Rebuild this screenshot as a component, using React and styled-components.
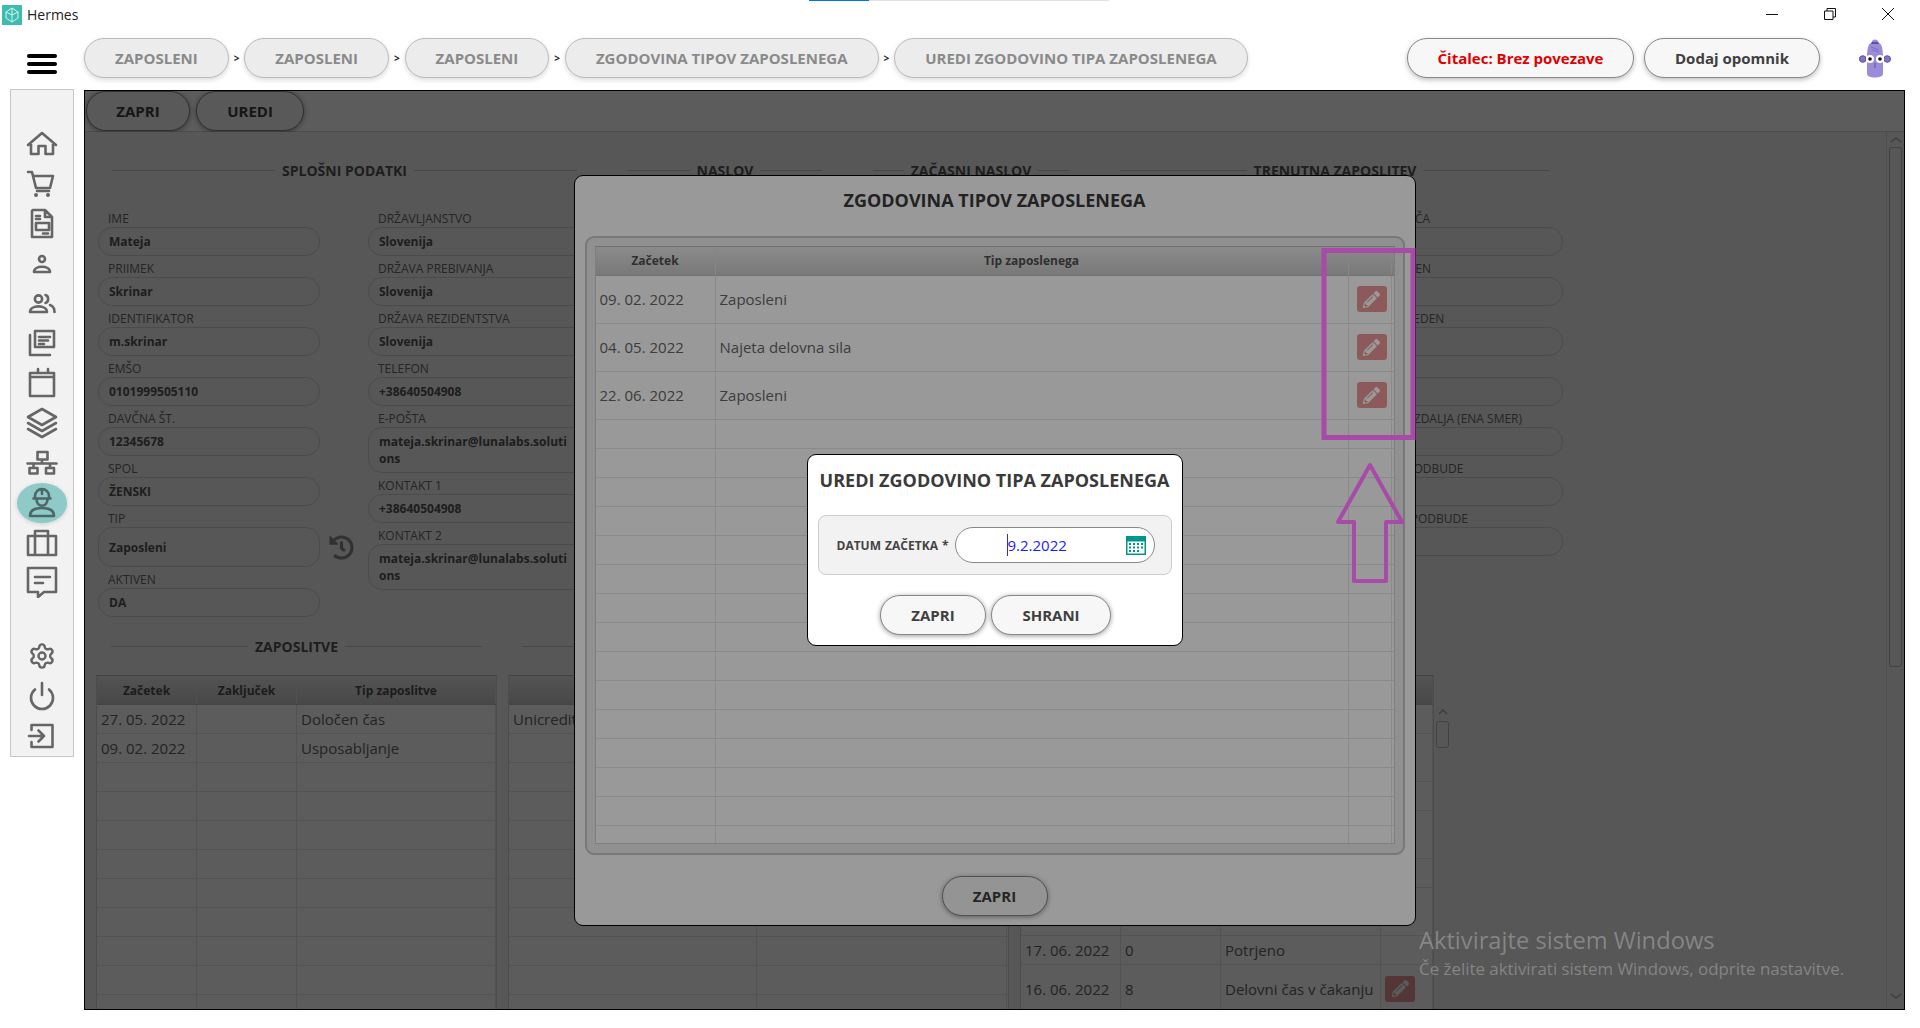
import React from 'react';
import styled, { createGlobalStyle } from 'styled-components';
import { FaPencilAlt, FaHistory } from 'react-icons/fa';
import { Settings } from 'lucide-react';

const Global = createGlobalStyle`
  html, body { margin: 0; padding: 0; background: #fff; }
  * { box-sizing: border-box; }
  body { font-family: "Open Sans", "Noto Sans", sans-serif; }
`;

const Page = styled.div`
  width: 1920px; height: 1028px; overflow: hidden; background: #fff;
  display: flex; flex-direction: column; position: relative;
`;

/* ---------- title bar ---------- */
const TitleBar = styled.div`
  height: 30px; display: flex; align-items: center; padding-left: 2px; position: relative;
`;
const AppTitle = styled.span`
  font-size: 14px; color: #222; margin-left: 5px; margin-top: -1px;
`;
const Progress = styled.div`
  position: absolute; left: 809px; top: 0; width: 300px; height: 1px; background: #e2e2e2;
`;
const ProgressFill = styled.div`
  width: 60px; height: 1px; background: #0078d7;
`;
const WinControls = styled.div`
  margin-left: auto; display: flex; align-items: center; padding-right: 26px; gap: 46px; margin-top: -3px;
`;

/* ---------- header ---------- */
const Header = styled.header`
  height: 60px; display: flex; align-items: center; padding-bottom: 4px;
`;
const BurgerSlot = styled.div`
  width: 84px; padding-left: 27px; margin-top: 12px; display: flex; flex-direction: column; gap: 4px;
`;
const BurgerBar = styled.span`
  display: block; width: 30px; height: 4px; border-radius: 2px; background: #000;
`;
const Crumbs = styled.nav`
  display: flex; align-items: center;
`;
const Crumb = styled.div`
  height: 40px; padding: 0 30px; display: flex; align-items: center;
  border-radius: 20px; border: 1px solid #bbb; background: #ececec;
  color: #8a8a8a; font-weight: 700; font-size: 15px; white-space: nowrap;
  box-shadow: 0 2px 5px rgba(0,0,0,.14);
`;
const CrumbSep = styled.span`
  width: 15.6px; text-align: center; font-size: 10px; font-weight: 700; color: #222;
`;
const HeaderRight = styled.div`
  margin-left: auto; display: flex; align-items: center; padding-right: 29px;
`;
const StatusPill = styled.div`
  height: 40px; display: flex; align-items: center; justify-content: center;
  width: ${p => p.$w}px; margin-right: ${p => p.$mr}px;
  border-radius: 20px; border: 1px solid #888; background: #f7f7f7;
  color: ${p => p.$color}; font-weight: 700; font-size: 15px;
  box-shadow: 0 2px 5px rgba(0,0,0,.25);
`;

/* ---------- layout ---------- */
const Main = styled.div`
  display: flex; align-items: flex-start;
`;
const Sidebar = styled.aside`
  width: 64px; height: 668px; margin: -1px 0 0 10px; padding-top: 34px;
  background: #f2f2f2; border: 1px solid #c6c6c6; display: flex; flex-direction: column; align-items: center;
`;
const NavItem = styled.div`
  width: 50px; height: 40px; display: flex; align-items: center; justify-content: center;
  border-radius: 50%; color: ${p => (p.$active ? '#4d6666' : '#666')};
  background: ${p => (p.$active ? '#8ecbc8' : 'transparent')};
  box-shadow: ${p => (p.$active ? '0 1px 4px rgba(0,0,0,.15)' : 'none')};
  margin-top: ${p => p.$mt || 0}px;
`;
const NavIcon = styled.svg`
  width: 32px; height: 32px; fill: none; stroke: currentColor; stroke-width: 2.6;
  stroke-linejoin: round; stroke-linecap: round;
`;

const Panel = styled.main`
  position: relative; margin-left: 10px; width: 1821px; height: 920px; overflow: hidden;
  border: 1px solid #000; background: #fff; display: flex; flex-direction: column;
`;
const Toolbar = styled.div`
  height: 41px; flex: none; display: flex; gap: 6px; padding-left: 1px; border-bottom: 1px solid #d8d8d8;
`;
const PillButton = styled.button`
  height: 40px; width: ${p => p.$w}px; border-radius: 20px; border: 1px solid #888; background: #f7f7f7;
  color: #404040; font: 700 15px "Open Sans", sans-serif; padding: 0; flex: none;
  box-shadow: 0 1px 5px rgba(0,0,0,.4);
`;
const Body = styled.div`
  flex: 1; min-height: 0; display: flex; background: #f2f2f2;
`;
const Content = styled.div`
  flex: 1; min-width: 0; padding: 28px 0 0 11px; overflow: hidden;
`;
const OuterScroll = styled.div`
  width: 18px; flex: none; border-left: 1px solid #d8d8d8; display: flex; flex-direction: column; align-items: center; padding-top: 2px;
`;
const ScrollThumb = styled.div`
  width: ${p => p.$w}px; height: ${p => p.$h}px; margin-top: ${p => p.$mt}px; border: 1px solid #b8b8b8; border-radius: 3px;
  background: #f2f2f2; flex: none;
`;
const ScrollGlyph = styled.svg`
  width: 12px; height: 8px; fill: none; stroke: #a8a8a8; stroke-width: 1.3; flex: none;
  margin-top: ${p => p.$mt || 0}px;
`;

/* ---------- form ---------- */
const TopGrid = styled.div`
  margin-left: 2px; display: grid; grid-template-columns: 479px 194px 196px 443px; column-gap: 51px;
`;
const SectionTitle = styled.div`
  height: 20px; display: flex; align-items: center; gap: 7px;
  padding: 0 ${p => p.$pr || 0}px 0 ${p => p.$pl || 0}px;
  font-weight: 700; font-size: 14px; color: #555; white-space: nowrap;
  &::before, &::after { content: ""; flex: 1; height: 1px; background: #c8c8c8; }
`;
const FieldCols = styled.div`
  display: grid; grid-template-columns: 270px 222px; margin-top: 26px;
`;
const FieldCol = styled.div`
  display: flex; flex-direction: column; margin-left: ${p => p.$ml || 0}px; width: ${p => p.$w || 'auto'};
`;
const FieldLabel = styled.div`
  height: 21px; padding: 4px 0 0 10px; font-size: 12px; line-height: 17px; color: #6a6a6a; white-space: nowrap;
`;
const FieldRow = styled.div`
  display: flex; align-items: center; gap: 9px;
`;
const FieldValue = styled.div`
  width: 222px; height: ${p => p.$h || 29}px; flex: none; border: 1px solid #d2d2d2; border-radius: 14px;
  padding: ${p => (p.$wrap ? '5px 21px 0 10px' : '0 10px')}; display: ${p => (p.$wrap ? 'block' : 'flex')}; align-items: center;
  font-size: 12px; font-weight: 700; color: #555; line-height: 17px; word-break: break-all;
`;
const HistoryIcon = styled(FaHistory)`
  color: #8a8a8a; flex: none;
`;

const LowerRow = styled.div`
  display: flex; margin-top: 19px; gap: 11px;
`;
const LowerSection = styled.section`
  width: ${p => p.$w}px; flex: none;
`;
const TableHolder = styled.div`
  margin-top: 19px; display: flex;
`;
const InnerScroll = styled.div`
  width: 17px; flex: none; padding-top: 33px; display: flex; flex-direction: column; align-items: center; background: #f2f2f2;
`;

/* ---------- tables ---------- */
const DataTable = styled.div`
  flex: 1; min-width: 0; height: ${p => (p.$h ? p.$h + 'px' : 'auto')}; overflow: hidden;
  border: 1px solid #d4d4d4; border-top-color: #bbb; background: #fff;
`;
const Rows = styled.div`
  display: grid; grid-template-columns: ${p => p.$cols}; height: ${p => p.$h}px;
  border-bottom: 1px solid #e6e6e6;
`;
const HeadRows = styled(Rows)`
  background: linear-gradient(#e8e8e8, #c9c9c9); border-bottom: 1px solid #c0c0c0;
`;
const HeadCell = styled.div`
  display: flex; align-items: center; justify-content: center; font-size: 12px; font-weight: 700; color: #505050;
  border-right: 1px solid #dedede; white-space: nowrap;
`;
const Cell = styled.div`
  display: flex; align-items: center; padding-left: ${p => p.$pl || 4}px; font-size: 15px; color: #666;
  border-right: 1px solid #e6e6e6; white-space: nowrap; overflow: hidden;
`;
const EditBtn = styled.div`
  width: 30px; height: 26px; border-radius: 3px; background: #ec9699; color: #fff;
  display: flex; align-items: center; justify-content: center; flex: none;
`;

/* ---------- modals ---------- */
const Overlay = styled.div`
  position: absolute; inset: 0; background: rgba(0,0,0,.4);
  display: flex; align-items: center; justify-content: center;
`;
const HistoryModal = styled.div`
  width: 842px; height: 751px; background: #fff; border: 1px solid #000; border-radius: 9px;
  display: flex; flex-direction: column; align-items: center;
`;
const ModalTitle = styled.div`
  height: ${p => p.$h}px; flex: none; display: flex; align-items: center; justify-content: center;
  font-weight: 700; font-size: 18px; color: #3a3a3a; white-space: nowrap; margin-bottom: ${p => p.$mb || 0}px;
`;
const HistoryBox = styled.div`
  width: 820px; height: 619px; flex: none; margin-bottom: 21px; padding: 8px 8px 9px 8px;
  border: 2px solid #c8c8c8; border-radius: 9px; background: #f0f0f0; display: flex;
`;
const EditModal = styled.div`
  width: 376px; height: 192px; background: #fff; border: 1px solid #000; border-radius: 9px;
  display: flex; flex-direction: column; align-items: center; padding-top: 12px;
`;
const FormBox = styled.div`
  width: 354px; height: 60px; margin-top: 22px; flex: none; background: #f2f2f2; border: 1px solid #ccc; border-radius: 8px;
  display: flex; align-items: center; padding-left: 18px;
`;
const FormLabel = styled.label`
  width: 118px; flex: none; font-size: 12px; font-weight: 700; color: #444; white-space: nowrap; word-spacing: 1px;
`;
const DateInput = styled.div`
  width: 200px; height: 36px; border: 1px solid #888; border-radius: 18px; background: #fff;
  display: flex; align-items: center; padding: 0 8px 0 51px;
`;
const DateText = styled.span`
  font-size: 15px; color: #1a1aff; border-left: 1px solid #2a2ae0; line-height: 22px; height: 22px;
`;
const CalendarIcon = styled.svg`
  width: 20px; height: 20px; margin-left: auto; flex: none;
`;
const ButtonRow = styled.div`
  display: flex; gap: 5px; margin-top: 20px; padding-left: 2px;
`;

/* ---------- things that lie over the page ---------- */
const Annotation = styled.svg`
  position: absolute; left: 1235px; top: 154px; width: 96px; height: 340px; fill: none; stroke: #a84ba8;
`;
const Watermark = styled.div`
  position: absolute; left: 1334px; top: 834px; color: rgba(255,255,255,.28); white-space: nowrap; pointer-events: none;
`;
const WatermarkTitle = styled.div`
  font-size: 23.7px; line-height: 30px;
`;
const WatermarkText = styled.div`
  font-size: 16.9px; line-height: 22px; margin-top: 3px;
`;

/* ---------- icons ---------- */
const Ico = ({ children }) => <NavIcon viewBox="0 0 32 32">{children}</NavIcon>;
const Fill = styled.circle`
  fill: currentColor; stroke: none;
`;
const icons = [
  <Ico key="home"><path d="M2 17 16 5l14 12M5 14.5V26h7.5v-8h7v8H27V14.5" /></Ico>,
  <Ico key="cart"><path d="M2 4h4l4 16h14l3-12H7M11 23h12" /><Fill cx="10" cy="27" r="2" /><Fill cx="22" cy="27" r="2" /></Ico>,
  <Ico key="doc"><path d="M7 2h12l7 7v20H6V3zM19 2v7h7M10 8h4M10 11h4M10 15h13v7H10zM17 25.5h5" /></Ico>,
  <Ico key="person"><circle cx="16" cy="11" r="3" /><path d="M8 24c0-7 16-7 16 0z" /></Ico>,
  <Ico key="people"><circle cx="12.5" cy="12" r="3.6" /><path d="M19.5 8c3.5 1 3.5 7 0 8M4 25c0-7.5 17-7.5 17 0zM24 18c3 1 4.500 4 4.500 7" /></Ico>,
  <Ico key="copies"><path d="M9 4h19v16H9zM4 8v20h20M13 10h11M13 13.500h9M13 17h5" /></Ico>,
  <Ico key="calendar"><path d="M4 6h24v23H4zM4 10h24M12 2v4M22 2v4" /></Ico>,
  <Ico key="layers"><path d="M16 2 30 10 16 18 2 10zM2 16l14 8 14-8M2 22l14 8 14-8" /></Ico>,
  <Ico key="network"><path d="M11.500 5h10v7.500h-10zM16 12.500v4M1.500 16.500h29M7.500 16.500v4M24 16.500v4M3.500 21h8v5.500h-8zM20 21h8v5.500h-8z" /></Ico>,
  <Ico key="worker" active><path d="M9 11.500V9a7 7 0 0 1 14 0v2.500M7.500 11.500h17M16 2v5M10.500 12c0 9 11 9 11 0M4 29c0-7 6-8 12-8s12 1 12 8z" /></Ico>,
  <Ico key="case"><path d="M2 9h28v19H2zM9 9V4h13v5M9 9v19M22 9v19" /></Ico>,
  <Ico key="chat"><path d="M2 2h28v24H18l-6 5v-5H2zM9 11h15M9 17h8" /></Ico>,
];

const Row = ({ cols, h, children }) => <Rows $cols={cols} $h={h}>{children}</Rows>;
const emptyRows = (cols, n, h = 29) =>
  Array.from({ length: n }, (_, i) => {
    const cells = cols.split(' ').map((_, j) => <Cell key={j} />);
    return <Row key={i} cols={cols} h={h}>{cells}</Row>;
  });

const Pencil = () => <FaPencilAlt size={17} />;

const T1 = '100px 100px 199px';
const T2 = '248px 250px';
const T3 = '100px 100px 160px 52px';
const TM = '120px 633px 43px';

const f1 = [['IME', 'Mateja'], ['PRIIMEK', 'Skrinar'], ['IDENTIFIKATOR', 'm.skrinar'], ['EMŠO', '0101999505110'], ['DAVČNA ŠT.', '12345678'], ['SPOL', 'ŽENSKI']];
const f2 = [['DRŽAVLJANSTVO', 'Slovenija'], ['DRŽAVA PREBIVANJA', 'Slovenija'], ['DRŽAVA REZIDENTSTVA', 'Slovenija'], ['TELEFON', '+38640504908']];
const f4 = ['BRUTO PLAČA', 'URE NA 1 DEN', 'URE NA 1 TEDEN', 'DOPUST', 'PREVOZ RAZDALJA (ENA SMER)', 'SKUPNE SPODBUDE', 'DODATNE PODBUDE'];
const history = [['09. 02. 2022', 'Zaposleni'], ['04. 05. 2022', 'Najeta delovna sila'], ['22. 06. 2022', 'Zaposleni']];
const crumbs = ['ZAPOSLENI', 'ZAPOSLENI', 'ZAPOSLENI', 'ZGODOVINA TIPOV ZAPOSLENEGA', 'UREDI ZGODOVINO TIPA ZAPOSLENEGA'];

const Field = ({ label, children }) => (
  <div>
    <FieldLabel>{label}</FieldLabel>
    {children}
  </div>
);

export default function App() {
  return (
    <Page>
      <Global />
      <TitleBar>
        <svg width="20" height="20" viewBox="0 0 20 20">
          <rect width="20" height="20" fill="#3dbdb0" />
          <path d="M10 3 4 7v6l6 4 6-4V7zM10 3v14M4 7l6 3 6-3" fill="none" stroke="#d8f3f0" strokeWidth="1" />
        </svg>
        <AppTitle>Hermes</AppTitle>
        <Progress><ProgressFill /></Progress>
        <WinControls>
          <svg width="12" height="12" viewBox="0 0 12 12"><path d="M0 6.500h12" stroke="#111" /></svg>
          <svg width="12" height="12" viewBox="0 0 12 12" fill="none"><path d="M.5 3h8.500v8.500H.5zM3 3V.5h8.500V9H9" stroke="#111" /></svg>
          <svg width="12" height="12" viewBox="0 0 12 12"><path d="m0 0 12 12M12 0 0 12" stroke="#111" /></svg>
        </WinControls>
      </TitleBar>

      <Header>
        <BurgerSlot><BurgerBar /><BurgerBar /><BurgerBar /></BurgerSlot>
        <Crumbs>
          {crumbs.map((c, i) => (
            <React.Fragment key={i}>
              {i > 0 && <CrumbSep>&gt;</CrumbSep>}
              <Crumb>{c}</Crumb>
            </React.Fragment>
          ))}
        </Crumbs>
        <HeaderRight>
          <StatusPill $w={227} $mr={10} $color="#e00000">Čitalec: Brez povezave</StatusPill>
          <StatusPill $w={176} $mr={39} $color="#404040">Dodaj opomnik</StatusPill>
          <svg width="32" height="39" viewBox="0 0 32 39">
            <path d="M16 .5c2 0 3 1 3.500 3l2.500 2c1.500 3 2 8 2 12v17c0 3-4 4-8 4s-8-1-8-4V17.500c0-4 .5-9 2-12l2.500-2c.5-2 1.500-3 3.500-3z" fill="#9b8bd8" />
            <path d="M13 3h6l1 2h-8z" fill="#5f4f9e" />
            <path d="M12 8l8 3M13 11l7 2" stroke="#7c6bc0" fill="none" />
            <circle cx="3.800" cy="20" r="3.300" fill="#8373c8" stroke="#5f4f9e" />
            <circle cx="28.200" cy="20" r="3.300" fill="#8373c8" stroke="#5f4f9e" />
            <circle cx="11" cy="20" r="4" fill="#fff" />
            <circle cx="21" cy="20" r="4" fill="#fff" />
            <circle cx="11" cy="20" r="1.800" fill="#111" />
            <circle cx="21" cy="20" r="1.800" fill="#111" />
            <path d="M16 24v5" stroke="#5f4f9e" fill="none" />
          </svg>
        </HeaderRight>
      </Header>

      <Main>
        <Sidebar>
          {icons.map(ic => (
            <NavItem key={ic.key} $active={ic.props.active}>{ic}</NavItem>
          ))}
          <NavItem $mt={34}><Settings size={28} strokeWidth={2.1} /></NavItem>
          <NavItem><Ico><path d="M9 9.500a11 11 0 1 0 14 0M16 3v12" /></Ico></NavItem>
          <NavItem><Ico><path d="M5.500 10V5h21v22h-21v-5M3 16h15M12.500 10.500 18 16l-5.500 5.500" /></Ico></NavItem>
        </Sidebar>

        <Panel>
          <Toolbar>
            <PillButton $w={104}>ZAPRI</PillButton>
            <PillButton $w={108}>UREDI</PillButton>
          </Toolbar>
          <Body>
            <Content>
              <TopGrid>
                <div>
                  <SectionTitle $pl={14}>SPLOŠNI PODATKI</SectionTitle>
                  <FieldCols>
                    <FieldCol>
                      {f1.map(([l, v]) => <Field key={l} label={l}><FieldValue>{v}</FieldValue></Field>)}
                      <Field label="TIP">
                        <FieldRow>
                          <FieldValue $h={40}>Zaposleni</FieldValue>
                          <HistoryIcon size={25} />
                        </FieldRow>
                      </Field>
                      <Field label="AKTIVEN"><FieldValue>DA</FieldValue></Field>
                    </FieldCol>
                    <FieldCol>
                      {f2.map(([l, v]) => <Field key={l} label={l}><FieldValue>{v}</FieldValue></Field>)}
                      <Field label="E-POŠTA"><FieldValue $h={46} $wrap>mateja.skrinar@lunalabs.solutions</FieldValue></Field>
                      <Field label="KONTAKT 1"><FieldValue>+38640504908</FieldValue></Field>
                      <Field label="KONTAKT 2"><FieldValue $h={46} $wrap>mateja.skrinar@lunalabs.solutions</FieldValue></Field>
                    </FieldCol>
                  </FieldCols>
                </div>
                <div><SectionTitle>NASLOV</SectionTitle></div>
                <div><SectionTitle>ZAČASNI NASLOV</SectionTitle></div>
                <div>
                  <SectionTitle $pr={13}>TRENUTNA ZAPOSLITEV</SectionTitle>
                  <FieldCols>
                    <FieldCol $ml={221} $w="222px">
                      {f4.map(l => <Field key={l} label={l}><FieldValue /></Field>)}
                    </FieldCol>
                  </FieldCols>
                </div>
              </TopGrid>

              <LowerRow>
                <LowerSection $w={401}>
                  <SectionTitle $pl={15} $pr={15}>ZAPOSLITVE</SectionTitle>
                  <TableHolder>
                    <DataTable>
                      <HeadRows $cols={T1} $h={29}>
                        <HeadCell>Začetek</HeadCell><HeadCell>Zaključek</HeadCell><HeadCell>Tip zaposlitve</HeadCell>
                      </HeadRows>
                      <Row cols={T1} h={29}><Cell>27. 05. 2022</Cell><Cell /><Cell>Določen čas</Cell></Row>
                      <Row cols={T1} h={29}><Cell>09. 02. 2022</Cell><Cell /><Cell>Usposabljanje</Cell></Row>
                      {emptyRows(T1, 9)}
                    </DataTable>
                  </TableHolder>
                </LowerSection>
                <LowerSection $w={501}>
                  <SectionTitle $pl={14} $pr={14}>BANČNI RAČUNI</SectionTitle>
                  <TableHolder>
                    <DataTable>
                      <HeadRows $cols={T2} $h={29}><HeadCell>Banka</HeadCell><HeadCell>Račun</HeadCell></HeadRows>
                      <Row cols={T2} h={29}><Cell>Unicredit</Cell><Cell /></Row>
                      {emptyRows(T2, 10)}
                    </DataTable>
                  </TableHolder>
                </LowerSection>
                <LowerSection $w={431}>
                  <SectionTitle $pr={36}>DELOVNI ČAS</SectionTitle>
                  <TableHolder>
                    <DataTable>
                      <HeadRows $cols={T3} $h={29}>
                        <HeadCell>Datum</HeadCell><HeadCell>Ure</HeadCell><HeadCell>Status</HeadCell><HeadCell />
                      </HeadRows>
                      {emptyRows(T3, 1)}
                      {emptyRows(T3, 1, 48)}
                      {emptyRows(T3, 1)}
                      {emptyRows(T3, 1, 48)}
                      {emptyRows(T3, 1)}
                      {emptyRows(T3, 1, 48)}
                      <Row cols={T3} h={29}><Cell>17. 06. 2022</Cell><Cell>0</Cell><Cell>Potrjeno</Cell><Cell /></Row>
                      <Row cols={T3} h={48}>
                        <Cell>16. 06. 2022</Cell><Cell>8</Cell><Cell>Delovni čas v čakanju</Cell>
                        <Cell $pl={4}><EditBtn><Pencil /></EditBtn></Cell>
                      </Row>
                    </DataTable>
                    <InnerScroll>
                      <ScrollGlyph viewBox="0 0 12 8"><path d="m2 6 4-4 4 4" /></ScrollGlyph>
                      <ScrollThumb $w={13} $h={27} $mt={5} />
                    </InnerScroll>
                  </TableHolder>
                </LowerSection>
              </LowerRow>
            </Content>
            <OuterScroll>
              <ScrollGlyph $mt={2} viewBox="0 0 12 8"><path d="m1 6 5-4 5 4" /></ScrollGlyph>
              <ScrollThumb $w={13} $h={520} $mt={3} />
              <ScrollGlyph $mt={325} viewBox="0 0 12 8"><path d="m1 2 5 4 5-4" /></ScrollGlyph>
            </OuterScroll>
          </Body>

          <Overlay>
            <HistoryModal>
              <ModalTitle $h={49} $mb={11}>ZGODOVINA TIPOV ZAPOSLENEGA</ModalTitle>
              <HistoryBox>
                <DataTable $h={598}>
                  <HeadRows $cols={TM} $h={29}>
                    <HeadCell>Začetek</HeadCell><HeadCell>Tip zaposlenega</HeadCell><HeadCell />
                  </HeadRows>
                  {history.map(([d, t]) => (
                    <Row key={d} cols={TM} h={48}>
                      <Cell>{d}</Cell><Cell>{t}</Cell>
                      <Cell $pl={8}><EditBtn><Pencil /></EditBtn></Cell>
                    </Row>
                  ))}
                  {emptyRows(TM, 15)}
                </DataTable>
              </HistoryBox>
              <PillButton $w={106}>ZAPRI</PillButton>
            </HistoryModal>
          </Overlay>

          <Overlay>
            <EditModal>
              <ModalTitle $h={26}>UREDI ZGODOVINO TIPA ZAPOSLENEGA</ModalTitle>
              <FormBox>
                <FormLabel>DATUM ZAČETKA *</FormLabel>
                <DateInput>
                  <DateText>9.2.2022</DateText>
                  <CalendarIcon viewBox="0 0 20 20">
                    <path d="M0 1h20v19H0z" fill="#00968a" />
                    <path d="M1.500 6.500h17V18.500h-17z" fill="#fff" />
                    <path d="M3 8h2v2H3zM7 8h2v2H7zM11 8h2v2h-2zM15 8h2v2h-2zM3 11.500h2v2H3zM7 11.500h2v2H7zM11 11.500h2v2h-2zM15 11.500h2v2h-2zM3 15h2v2H3zM7 15h2v2H7zM11 15h2v2h-2z" fill="#00968a" />
                  </CalendarIcon>
                </DateInput>
              </FormBox>
              <ButtonRow>
                <PillButton $w={106}>ZAPRI</PillButton>
                <PillButton $w={120}>SHRANI</PillButton>
              </ButtonRow>
            </EditModal>
          </Overlay>

          <Annotation viewBox="0 0 96 340">
            <rect x="4" y="5.500" width="89" height="187" strokeWidth="5" />
            <path d="M50 220 82 277H66V336H34V277H18z" strokeWidth="4" strokeLinejoin="round" />
          </Annotation>

          <Watermark>
            <WatermarkTitle>Aktivirajte sistem Windows</WatermarkTitle>
            <WatermarkText>Če želite aktivirati sistem Windows, odprite nastavitve.</WatermarkText>
          </Watermark>
        </Panel>
      </Main>
    </Page>
  );
}
